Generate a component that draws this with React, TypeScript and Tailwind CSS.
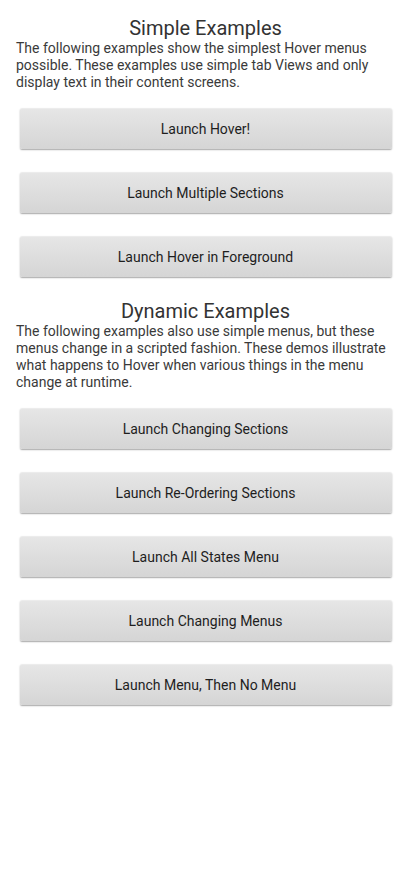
const simple = ['Launch Hover!', 'Launch Multiple Sections', 'Launch Hover in Foreground'];

const dynamic = [
  'Launch Changing Sections',
  'Launch Re-Ordering Sections',
  'Launch All States Menu',
  'Launch Changing Menus',
  'Launch Menu, Then No Menu',
];

const LaunchButton = ({ label }: { label: string }) => (
  <button
    type="button"
    className="flex h-[41px] w-[372px] items-center justify-center rounded-[2px] border-t border-t-[#ececec] bg-gradient-to-b from-[#e6e6e6] to-[#d5d5d5] text-[14px] text-[#1e1e1e] shadow-[0_1px_1.5px_rgba(0,0,0,0.35)]"
  >
    {label}
  </button>
);

const Section = ({ title, text, buttons }: { title: string; text: string; buttons: string[] }) => (
  <div className="flex flex-col">
    <h1 className="text-center text-[20px] leading-[23px] text-[#333]">{title}</h1>
    <p className="px-4 text-[14px] leading-[17px] text-[#3a3a3a]">{text}</p>
    <div className="mt-[17px] flex flex-col items-center gap-[23px]">
      {buttons.map((b) => (
        <LaunchButton key={b} label={b} />
      ))}
    </div>
  </div>
);

export default function App() {
  return (
    <div className="min-h-[891px] w-[411px] bg-white pt-[17px] font-['Roboto',sans-serif]">
      <Section
        title="Simple Examples"
        text="The following examples show the simplest Hover menus possible. These examples use simple tab Views and only display text in their content screens."
        buttons={simple}
      />
      <div className="mt-[23px]">
        <Section
          title="Dynamic Examples"
          text="The following examples also use simple menus, but these menus change in a scripted fashion. These demos illustrate what happens to Hover when various things in the menu change at runtime."
          buttons={dynamic}
        />
      </div>
    </div>
  );
}
